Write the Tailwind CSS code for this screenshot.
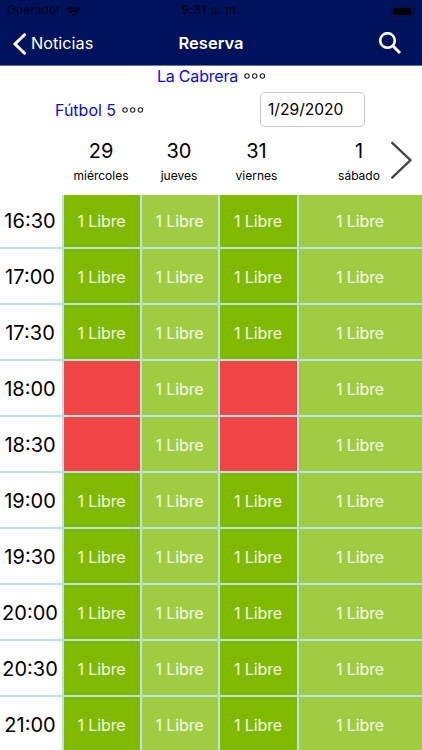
<!DOCTYPE html>
<html lang="es">
<head>
    <meta charset="UTF-8">
    <meta name="viewport" content="width=device-width, initial-scale=1.0">
    <title>Reserva</title>
    <script src="https://cdn.jsdelivr.net/npm/@tailwindcss/browser@4"></script>
</head>
<body class="h-screen overflow-hidden bg-white text-black font-['Inter','Liberation_Sans',sans-serif]">
    <header class="h-[66px] bg-[#00125c] border-b border-[#6b7299]">
        <!-- Status bar -->
        <div class="grid grid-cols-[1fr_auto_1fr] items-center h-[22px] px-[7px] text-[11.5px] leading-none text-[#000420]">
            <div class="flex items-center gap-[5px]">
                <span class="tracking-[0.3px]">Operador</span>
                <svg class="w-[15px] h-[11px]" viewBox="0 0 15 11" fill="none" stroke="currentColor" stroke-width="2.200">
                    <path d="M1 4a9.2 9.2 0 0 1 13 0M3.4 6.5a5.8 5.8 0 0 1 8.2 0"/>
                    <path d="M5.2 8.4a3.3 3.3 0 0 1 4.6 0L7.500 10.800z" fill="currentColor" stroke="none"/>
                </svg>
            </div>
            <span class="font-semibold tracking-[0.6px]">9:31 a. m.</span>
            <svg class="justify-self-end w-[24px] h-[11px]" viewBox="0 0 24 11">
                <rect x=".5" y=".5" width="21" height="10" rx="2.500" fill="none" stroke="#000d48"/>
                <rect x="2" y="2" width="18" height="7" rx="1.500" fill="#000"/>
                <path d="M22.500 4v3.500" stroke="#000d48"/>
            </svg>
        </div>
        <!-- Navigation bar -->
        <nav class="grid grid-cols-[1fr_auto_1fr] items-center h-[43px] pl-3 pr-5 text-white text-[16.5px]">
            <a href="#" class="flex items-center gap-[5px]">
                <svg class="w-[14px] h-[22px]" viewBox="0 0 14 22" fill="none" stroke="currentColor" stroke-width="3" stroke-linecap="round">
                    <path d="M12.500 1.700L3 11l9.500 9.300"/>
                </svg>
                <span class="text-[16.3px]">Noticias</span>
            </a>
            <h1 class="pl-[8px] font-semibold">Reserva</h1>
            <svg class="justify-self-end w-[24px] h-[24px]" viewBox="0 0 24 24" fill="none" stroke="currentColor" stroke-width="2.600">
                <circle cx="9.500" cy="8.500" r="7.300"/>
                <path d="M14.800 13.800l7.200 7.200" stroke-width="3"/>
            </svg>
        </nav>
    </header>

    <main>
        <div class="flex items-center justify-center h-5 gap-[6px] pl-px">
            <a href="#" class="text-[16px] leading-5 tracking-[-0.2px] text-[#0c0cd8]">La Cabrera</a>
            <svg class="w-[22px] h-[8px]" viewBox="0 0 22 8" fill="none" stroke="#222" stroke-width="1.100">
                <circle cx="3" cy="4" r="2.200"/><circle cx="10.700" cy="4" r="2.200"/><circle cx="18.400" cy="4" r="2.200"/>
            </svg>
        </div>
        <div class="flex items-center justify-between pt-[6px] pl-[55px] pr-[57px]">
            <div class="flex items-center gap-[6px]">
                <a href="#" class="text-[16px] leading-5 text-[#0c0cd8]">Fútbol 5</a>
                <svg class="w-[22px] h-[8px]" viewBox="0 0 22 8" fill="none" stroke="#222" stroke-width="1.100">
                    <circle cx="3" cy="4" r="2.200"/><circle cx="10.700" cy="4" r="2.200"/><circle cx="18.400" cy="4" r="2.200"/>
                </svg>
            </div>
            <div class="flex items-center w-[105px] h-[35px] border border-[#ccc] rounded-[5px] pl-[7px] text-[15.6px]">1/29/2020</div>
        </div>

        <div class="relative grid grid-cols-[62px_78px_77px_79px_1fr] h-[68px] pt-3 text-center">
            <span></span>
            <div><div class="text-[20px] leading-6">29</div><div class="mt-[5px] text-[12px] leading-4">miércoles</div></div>
            <div class="pl-px"><div class="text-[20px] leading-6">30</div><div class="mt-[5px] text-[12px] leading-4">jueves</div></div>
            <div><div class="text-[20px] leading-6">31</div><div class="mt-[5px] text-[12px] leading-4">viernes</div></div>
            <div><div class="text-[20px] leading-6">1</div><div class="mt-[5px] text-[12px] leading-4">sábado</div></div>
            <svg class="absolute left-[390px] top-[14px] w-[23px] h-[38px]" viewBox="0 0 23 38" fill="none" stroke="#45454a" stroke-width="2.300" stroke-linecap="round" stroke-linejoin="round">
                <path d="M2.200 1.800L20.500 19.200L2.200 36.600"/>
            </svg>
        </div>

        <div id="schedule" class="grid grid-cols-[62px_76px_76px_77px_1fr] gap-[2px] bg-[#bde0e9]"></div>
    </main>

    <script>
        const hours = ['16:30', '17:00', '17:30', '18:00', '18:30', '19:00', '19:30', '20:00', '20:30', '21:00'];
        const booked = ['18:00', '18:30'];
        const schedule = document.getElementById('schedule');

        hours.forEach((hour, row) => {
            const height = row === 0 ? 'h-[52px]' : 'h-[54px] pt-px';
            let html = `<div class="${height} flex items-center justify-center bg-white text-[20px] pr-[2px]">${hour}</div>`;
            for (let day = 0; day < 4; day++) {
                const main = day % 2 === 0;
                const isBooked = main && booked.includes(hour);
                const color = isBooked ? 'bg-[#f04545]' : main ? 'bg-[#7fba00]' : 'bg-[#9fcc41]';
                html += `<div class="${height} flex items-center justify-center text-[16px] tracking-[-0.1px] pr-px text-white/90 ${color}">${isBooked ? '' : '1 Libre'}</div>`;
            }
            schedule.insertAdjacentHTML('beforeend', html);
        });
    </script>
</body>
</html>
